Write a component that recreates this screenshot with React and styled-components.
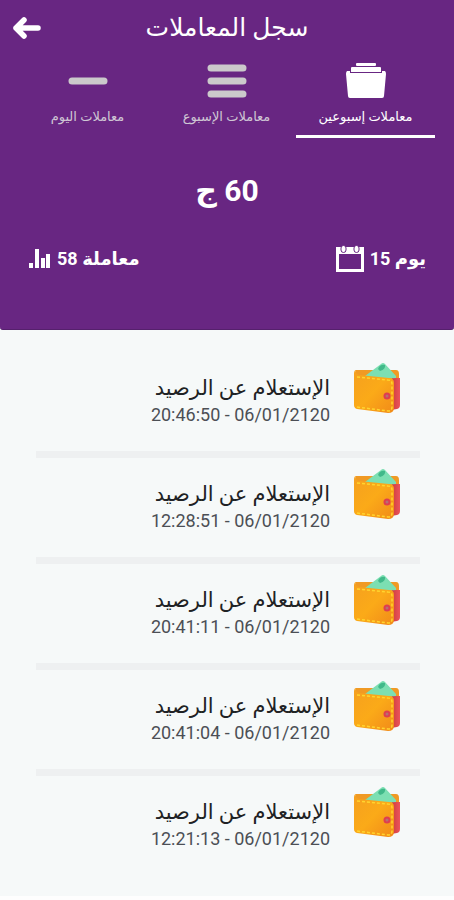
import React, { useState } from "react";
import styled, { createGlobalStyle } from "styled-components";

const GlobalStyle = createGlobalStyle`
  * { box-sizing: border-box; }
  body { margin: 0; background: #fefefe; }
`;

const Page = styled.main`
  font-family: Roboto, "DejaVu Sans", sans-serif;
  background: #f6f9f9;
`;

const Header = styled.header`
  background: #682682;
  color: #fff;
  border-bottom: 1px solid #55206c;
  border-radius: 0 0 3px 3px;
  padding-bottom: 53px;
`;

const TitleBar = styled.div`
  display: grid;
  grid-template-columns: 48px 1fr 48px;
  align-items: center;
  height: 56px;
`;

const BackButton = styled.button`
  display: flex;
  align-items: center;
  height: 48px;
  padding: 0 0 0 12px;
  border: 0;
  background: none;
  color: inherit;
  cursor: pointer;
`;

const Title = styled.h1`
  margin: 0;
  text-align: center;
  font-size: 25px;
  font-weight: 400;
  line-height: 32px;
`;

const Tabs = styled.nav`
  display: grid;
  grid-template-columns: repeat(3, 1fr);
  padding: 0 19px 0 18px;
`;

const Tab = styled.button`
  display: flex;
  flex-direction: column;
  align-items: center;
  gap: 4px;
  height: 82px;
  padding: 5px 0 0;
  border: 0;
  border-bottom: 3px solid ${(p) => (p.$active ? "#fff" : "transparent")};
  background: none;
  color: ${(p) => (p.$active ? "#fff" : "#cfc6d4")};
  font-family: inherit;
  font-size: 13px;
  line-height: 24px;
  white-space: nowrap;
  cursor: pointer;
`;

const Amount = styled.p`
  margin: 33px 0 0;
  text-align: center;
  font-size: 30px;
  font-weight: 700;
  line-height: 40px;
`;

const Stats = styled.div`
  display: flex;
  justify-content: space-between;
  margin-top: 31px;
  padding: 0 28px;
`;

const Stat = styled.div`
  display: flex;
  align-items: center;
  gap: 6px;
  font-size: 18px;
  font-weight: 700;
  line-height: 34px;
`;

const List = styled.ul`
  margin: 0;
  padding: 22px 34px 21px 36px;
  list-style: none;
`;

const Row = styled.li`
  display: flex;
  flex-direction: row-reverse;
  align-items: flex-start;
  gap: 22px;
  height: 106px;
  padding: 9px 18px 0 0;
  border-bottom: 7px solid #eef0f1;

  &:last-child {
    height: 99px;
    border-bottom: 0;
  }
`;

const RowText = styled.div`
  display: flex;
  flex-direction: column;
  align-items: flex-end;
  padding-top: 11px;
`;

const RowTitle = styled.h2`
  margin: 0;
  color: #202224;
  font-size: 21px;
  font-weight: 400;
  line-height: 32px;
`;

const RowDate = styled.time`
  color: #4c4f55;
  font-size: 18px;
  line-height: 22px;
`;

const BackArrow = () => (
  <svg width="30" height="24" viewBox="0 0 30 24" fill="none" stroke="currentColor" strokeWidth="5.5" strokeLinecap="round" strokeLinejoin="round" aria-hidden="true">
    <path d="M4 12H26M12 4L4 12L12 20" />
  </svg>
);

const FoldersIcon = () => (
  <svg width="42" height="40" viewBox="0 0 42 40" fill="#fff" aria-hidden="true">
    <rect x="11" y="2" width="20" height="3" rx="1" />
    <path d="M7 6H35Q36 6 36 7V11H6V7Q6 6 7 6Z" />
    <path d="M2 10H5V12H37V10H40Q41 11 41 13L39 35Q39 37 37 37H5Q3 37 3 35L1 13Q1 11 2 10Z" />
  </svg>
);

const LinesIcon = () => (
  <svg width="42" height="40" viewBox="0 0 42 40" stroke="#cbc9cb" strokeWidth="7" strokeLinecap="round" aria-hidden="true">
    <path d="M5 7H37M5 20H37M5 33H37" />
  </svg>
);

const LineIcon = () => (
  <svg width="42" height="40" viewBox="0 0 42 40" stroke="#cbc9cb" strokeWidth="7" strokeLinecap="round" aria-hidden="true">
    <path d="M5 20H37" />
  </svg>
);

const BarsIcon = () => (
  <svg width="23" height="20" viewBox="0 0 23 20" fill="#fff" aria-hidden="true">
    <path d="M1 14H5V19H1ZM7 0H11V19H7ZM13 9H17V19H13ZM18 5H22V19H18Z" />
  </svg>
);

const CalendarIcon = () => (
  <svg width="28" height="28" viewBox="0 0 28 28" aria-hidden="true">
    <path fill="#fff" fillRule="evenodd" d="M0 2H28V27H0ZM3 9V24H25V9Z" />
    <rect x="5" y="0.5" width="5" height="7" rx="2.5" fill="#fff" stroke="#682682" />
    <rect x="18" y="0.5" width="5" height="7" rx="2.5" fill="#fff" stroke="#682682" />
  </svg>
);

const WalletIcon = () => (
  <svg width="50" height="54" viewBox="0 0 50 54" aria-hidden="true">
    <defs>
      <linearGradient id="leather" x1="0" y1="0" x2="1" y2="1">
        <stop offset="0" stopColor="#f5a01f" />
        <stop offset=".5" stopColor="#fbaa18" />
        <stop offset="1" stopColor="#f18a19" />
      </linearGradient>
      <linearGradient id="lining" x1="0" y1="0" x2="1" y2="0">
        <stop offset="0" stopColor="#c93c3d" />
        <stop offset="1" stopColor="#ed545a" />
      </linearGradient>
    </defs>
    <path d="M4 9H44Q47 9 47 13V18H4Z" fill="#f09a24" />
    <path d="M40 17H48V44Q48 47 45 48L39 49Z" fill="url(#lining)" />
    <path d="M13 15L29 3Q31 1 33 3L44 15V17Q32 18 13 15Z" fill="#7cdfb2" />
    <path d="M26 8Q28 3 33 4Q34 8 28 10Z" fill="#41b98a" />
    <path d="M4 9Q2 9 2 13V44Q2 47 5 48L36 52Q42 52 42 47V22Q42 17 37 17L7 14Q3 13 4 9Z" fill="url(#leather)" />
    <path d="M5 16L36 19Q40 19 40 23V46Q40 50 36 50L5 46" fill="none" stroke="#ffd42e" strokeWidth="1.5" strokeDasharray="3 2" />
    <circle cx="35" cy="35" r="3.5" fill="#df3e50" />
    <circle cx="35" cy="35" r="1.5" fill="#b67072" />
  </svg>
);

const tabs = [
  { id: "today", label: "معاملات اليوم", Icon: LineIcon },
  { id: "week", label: "معاملات الإسبوع", Icon: LinesIcon },
  { id: "fortnight", label: "معاملات إسبوعين", Icon: FoldersIcon },
];

const transactions = [
  "20:46:50 - 06/01/2120",
  "12:28:51 - 06/01/2120",
  "20:41:11 - 06/01/2120",
  "20:41:04 - 06/01/2120",
  "12:21:13 - 06/01/2120",
];

export default function App() {
  const [active, setActive] = useState("fortnight");
  return (
    <Page lang="ar">
      <GlobalStyle />
      <Header>
        <TitleBar>
          <BackButton type="button" aria-label="رجوع"><BackArrow /></BackButton>
          <Title dir="rtl">سجل المعاملات</Title>
        </TitleBar>
        <Tabs>
          {tabs.map(({ id, label, Icon }) => (
            <Tab key={id} type="button" $active={active === id} aria-pressed={active === id} onClick={() => setActive(id)}>
              <Icon />
              <span dir="rtl">{label}</span>
            </Tab>
          ))}
        </Tabs>
        <Amount dir="rtl">60 ج</Amount>
        <Stats>
          <Stat><BarsIcon /><span dir="rtl">معاملة 58</span></Stat>
          <Stat><CalendarIcon /><span dir="rtl">يوم 15</span></Stat>
        </Stats>
      </Header>
      <List>
        {transactions.map((date) => (
          <Row key={date}>
            <WalletIcon />
            <RowText>
              <RowTitle dir="rtl">الإستعلام عن الرصيد</RowTitle>
              <RowDate>{date}</RowDate>
            </RowText>
          </Row>
        ))}
      </List>
    </Page>
  );
}
